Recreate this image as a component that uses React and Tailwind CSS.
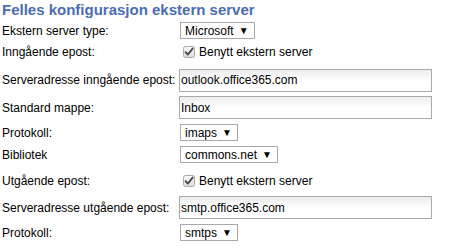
import React from 'react'

const Select = ({ value }) => (
  <div className="flex h-[17px] items-center border border-[#a9a9a9] bg-white pl-[4px] pr-[5px] text-[12px] leading-none text-black">
    <span>{value}</span>
    <span className="ml-[5px] text-[10px]">▼</span>
  </div>
)

const TextInput = ({ value }) => (
  <div className="flex h-[23px] w-[253px] items-center border border-[#aaaaaa] bg-gradient-to-b from-[#ececec] via-white to-white pl-[1px] text-[12px] text-black">
    {value}
  </div>
)

const Checkbox = ({ label }) => (
  <div className="flex items-center pl-[4px]">
    <svg width="12" height="12" viewBox="0 0 12 12">
      <defs>
        <linearGradient id="cb" x1="0" y1="0" x2="0" y2="1">
          <stop offset="0" stopColor="#fcfcfc" />
          <stop offset="1" stopColor="#dcdcdc" />
        </linearGradient>
      </defs>
      <rect x="0.5" y="0.5" width="11" height="11" rx="2" fill="url(#cb)" stroke="#a8a8a8" />
      <path d="M2.6 6.2 L4.8 8.6 L9.6 2.6" fill="none" stroke="#4a4a4a" strokeWidth="1.9" strokeLinecap="round" strokeLinejoin="round" />
    </svg>
    <span className="ml-[4px] text-[12px] text-black">{label}</span>
  </div>
)

export default function App() {
  return (
    <div className="h-[251px] w-[469px] bg-white font-['Liberation_Sans',Arial,sans-serif]">
      <div className="h-[21px] pl-[2px] pt-[1px] text-[15px] font-bold leading-[18px] text-[#4a6db3]">
        Felles konfigurasjon ekstern server
      </div>
      <div className="flex h-[19px] items-center">
        <div className="w-[180px] pl-[2px] text-[12px] text-black">Ekstern server type:</div>
        <Select value="Microsoft" />
      </div>
      <div className="flex h-[24px] items-center">
        <div className="w-[179px] pl-[2px] text-[12px] text-black">Inngående epost:</div>
        <Checkbox label="Benytt ekstern server" />
      </div>
      <div className="flex h-[32px] items-center">
        <div className="w-[179px] pl-[2px] text-[12px] text-black">Serveradresse inngående epost:</div>
        <TextInput value="outlook.office365.com" />
      </div>
      <div className="flex h-[23px] items-center">
        <div className="w-[179px] pl-[2px] text-[12px] text-black">Standard mappe:</div>
        <TextInput value="Inbox" />
      </div>
      <div className="flex h-[27px] items-center">
        <div className="w-[180px] pl-[2px] text-[12px] text-black">Protokoll:</div>
        <Select value="imaps" />
      </div>
      <div className="flex h-[17px] items-center">
        <div className="w-[180px] pl-[2px] text-[12px] text-black">Bibliotek</div>
        <Select value="commons.net" />
      </div>
      <div className="flex h-[33px] items-center pt-[3px]">
        <div className="w-[179px] pl-[2px] text-[12px] text-black">Utgående epost:</div>
        <Checkbox label="Benytt ekstern server" />
      </div>
      <div className="flex h-[23px] items-center">
        <div className="w-[179px] pl-[2px] text-[12px] text-black">Serveradresse utgående epost:</div>
        <TextInput value="smtp.office365.com" />
      </div>
      <div className="flex h-[27px] items-center">
        <div className="w-[180px] pl-[2px] text-[12px] text-black">Protokoll:</div>
        <Select value="smtps" />
      </div>
    </div>
  )
}
